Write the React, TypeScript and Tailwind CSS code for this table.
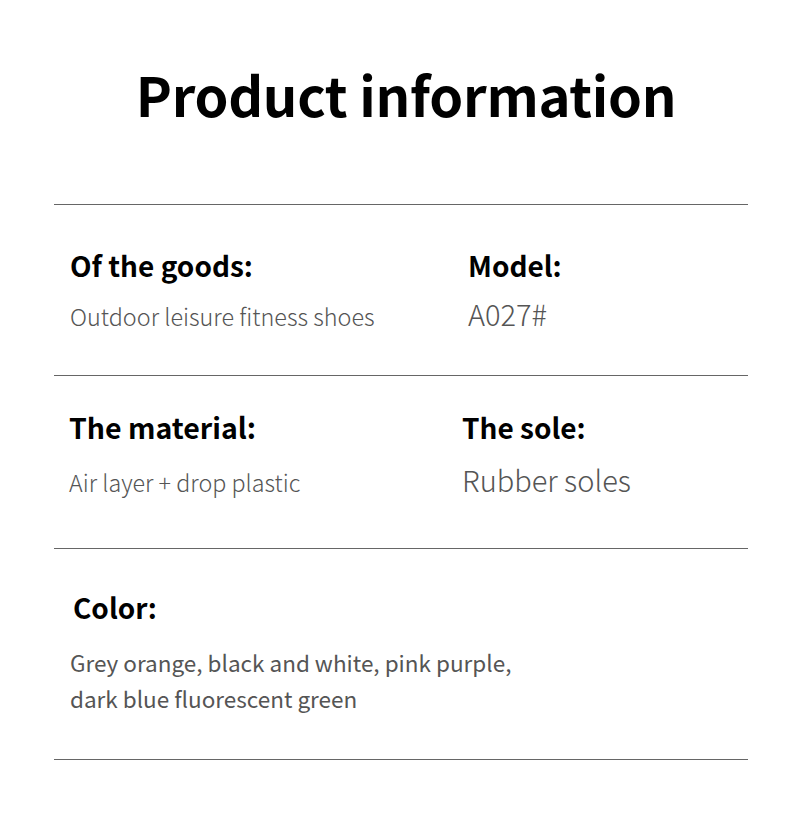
import React from "react";

const font = { fontFamily: '"Noto Sans CJK SC", "Noto Sans", sans-serif' };

export default function App() {
  return (
    <div className="w-[790px] h-[825px] bg-white text-black" style={font}>
      <div className="pt-[56px] pl-[22px] flex justify-center">
        <h1 className="text-[54.3px] font-bold leading-[76px] tracking-[-0.3px]">Product information</h1>
      </div>
      <div className="mx-[54px] mt-[72px] w-[694px]">
        <div className="h-px bg-[#666]" />
        <div className="h-[170px] flex">
          <div className="w-[399px] pl-[16px] pt-[40px]">
            <div className="text-[28px] font-bold leading-[40px]">Of the goods:</div>
            <div className="text-[23.4px] font-light leading-[32px] text-[#555] mt-[15px]">Outdoor leisure fitness shoes</div>
          </div>
          <div className="pl-[15px] pt-[40px]">
            <div className="text-[28px] font-bold leading-[40px]">Model:</div>
            <div className="text-[29px] font-light leading-[36px] text-[#555] mt-[10px]">A027#</div>
          </div>
        </div>
        <div className="h-px bg-[#666]" />
        <div className="h-[172px] flex">
          <div className="w-[392px] pl-[15px] pt-[31px]">
            <div className="text-[28.5px] font-bold leading-[40px]">The material:</div>
            <div className="text-[23.3px] font-light leading-[32px] text-[#555] mt-[19px]">Air layer + drop plastic</div>
          </div>
          <div className="pl-[16px] pt-[31px]">
            <div className="text-[28px] font-bold leading-[40px]">The sole:</div>
            <div className="text-[29px] font-light leading-[40px] text-[#555] mt-[12px]">Rubber soles</div>
          </div>
        </div>
        <div className="h-px bg-[#666]" />
        <div className="h-[210px] pt-[38px]">
          <div className="pl-[19px] text-[28px] font-bold leading-[40px]">Color:</div>
          <div className="pl-[16px] mt-[17px] text-[22.5px] leading-[36px] text-[#555]">
            Grey orange, black and white, pink purple,
            <br />
            dark blue fluorescent green
          </div>
        </div>
        <div className="h-px bg-[#666]" />
      </div>
    </div>
  );
}
